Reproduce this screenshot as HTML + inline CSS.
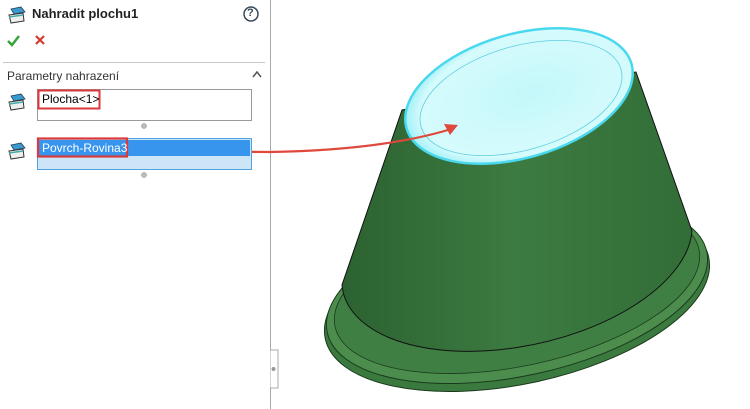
<!DOCTYPE html>
<html><head><meta charset="utf-8"><style>
body{margin:0;width:750px;height:409px;background:#fff;position:relative;overflow:hidden;font-family:"Liberation Sans",sans-serif}
.a{position:absolute}
</style></head><body>
<svg class="a" style="left:0;top:0" width="750" height="409">
<defs>
<radialGradient id="g2" cx="0.55" cy="0.5" r="0.6"><stop offset="0" stop-color="#c4f8fa"/><stop offset="0.8" stop-color="#d6fbfc"/><stop offset="1" stop-color="#7ae8f5"/></radialGradient>
<linearGradient id="side" x1="0" y1="0" x2="1" y2="0"><stop offset="0" stop-color="#2c6231"/><stop offset="0.5" stop-color="#3c7b41"/><stop offset="1" stop-color="#326d37"/></linearGradient>
</defs>
<line x1="270.5" y1="0" x2="270.5" y2="409" stroke="#a8a8a8"/>
<path d="M270.5 350 H278 V388 H270.5" fill="#fff" stroke="#a8a8a8"/>
<circle cx="273.5" cy="369" r="2" fill="#999"/>
<line x1="3" y1="62.5" x2="265" y2="62.5" stroke="#c8c8c8"/>
<!-- flange -->
<ellipse cx="517" cy="298" rx="196" ry="86" transform="rotate(-12 517 298)" fill="#3b7a3f" stroke="#1a3a1c" stroke-width="1"/>
<ellipse cx="517" cy="292" rx="194" ry="84" transform="rotate(-12 517 292)" fill="#4c8d4e" stroke="#1a3a1c" stroke-width="1"/>
<ellipse cx="517" cy="288" rx="186" ry="78" transform="rotate(-12 517 288)" fill="#3f7f43" stroke="#1a3a1c" stroke-width="0.8"/>
<!-- cone body -->
<path d="M402 110 L342 285 A178 92 -12 0 0 692 231 L636 72 Z" fill="url(#side)" stroke="#111" stroke-width="1"/>
<!-- top -->
<ellipse cx="519" cy="96" rx="117" ry="62" transform="rotate(-16 519 96)" fill="url(#g2)" stroke="#4ad8ee" stroke-width="2.5"/>
<ellipse cx="521" cy="98" rx="104" ry="52" transform="rotate(-16 521 98)" fill="none" stroke="#5ccfe0" stroke-width="0.8"/>
<!-- arrow -->
<path d="M127 151 L270 152 Q380 150 448 130" fill="none" stroke="#e0483c" stroke-width="2.2"/>
<path d="M458 125 L444 124 L450 135 Z" fill="#e0483c"/>
<!-- inputs -->
<rect x="37.5" y="89.5" width="214" height="31" fill="#fff" stroke="#9a9a9a"/>
<rect x="38.5" y="90.5" width="61" height="18" fill="none" stroke="#d9393a" stroke-width="2"/>
<circle cx="144" cy="126" r="2.5" fill="#bbb" stroke="#888" stroke-width="0.5"/>
<rect x="37.5" y="138.5" width="214" height="31" fill="#cde6f7" stroke="#4fa3e0"/>
<rect x="39" y="140" width="211" height="16" fill="#3795ee"/>
<rect x="38" y="138.5" width="89" height="18" fill="none" stroke="#d9393a" stroke-width="2.2"/>
<circle cx="144" cy="175" r="2.5" fill="#bbb" stroke="#888" stroke-width="0.5"/>
<g id="ic"><path d="M11 9 L21 7 L25 12 L14 14 Z" fill="#3a9ad0" stroke="#245" stroke-width="0.8"/><path d="M9 15 L23 13 L24 21 L11 23 Z" fill="#eee" stroke="#333" stroke-width="1"/><path d="M9 17 L23 15" stroke="#4aa" stroke-width="1.5"/></g>
<use href="#ic" x="0" y="87"/>
<use href="#ic" x="0" y="136"/>
<path d="M8 41 L12 45 L19 36" fill="none" stroke="#3aa33a" stroke-width="2.5"/>
<path d="M36 36 L44 44 M44 36 L36 44" stroke="#d23a2a" stroke-width="2.2"/>
<circle cx="251" cy="14" r="7" fill="#fff" stroke="#3a4a5a" stroke-width="1.5"/>
<path d="M253 77 L257 72 L261 77" fill="none" stroke="#555" stroke-width="1.5"/>
</svg>
<div class="a" style="left:32px;top:6px;font-size:13px;font-weight:bold;color:#222">Nahradit plochu1</div>
<div class="a" style="left:247px;top:7px;font-size:11px;font-weight:bold;color:#3a4a5a">?</div>
<div class="a" style="left:7px;top:69px;font-size:12px;color:#333">Parametry nahrazení</div>
<div class="a" style="left:42px;top:92px;font-size:12px;color:#000">Plocha&lt;1&gt;</div>
<div class="a" style="left:42px;top:141px;font-size:12px;color:#fff">Povrch-Rovina3</div>
</body></html>
